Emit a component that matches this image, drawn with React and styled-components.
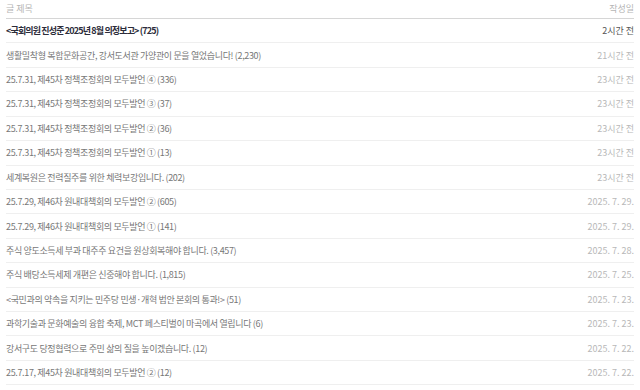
import React from 'react'
import styled, { createGlobalStyle } from 'styled-components'

const posts = [
    { id: 1, title: '<국회의원 진성준 2025년 8월 의정보고> (725)', date: '2시간 전', notice: true },
    { id: 2, title: '생활밀착형 복합문화공간, 강서도서관 가양관이 문을 열었습니다! (2,230)', date: '21시간 전' },
    { id: 3, title: '25.7.31, 제45차 정책조정회의 모두발언 ④ (336)', date: '23시간 전' },
    { id: 4, title: '25.7.31, 제45차 정책조정회의 모두발언 ③ (37)', date: '23시간 전' },
    { id: 5, title: '25.7.31, 제45차 정책조정회의 모두발언 ② (36)', date: '23시간 전' },
    { id: 6, title: '25.7.31, 제45차 정책조정회의 모두발언 ① (13)', date: '23시간 전' },
    { id: 7, title: '세계복원은 전력질주를 위한 체력보강입니다. (202)', date: '23시간 전' },
    { id: 8, title: '25.7.29, 제46차 원내대책회의 모두발언 ② (605)', date: '2025. 7. 29.' },
    { id: 9, title: '25.7.29, 제46차 원내대책회의 모두발언 ① (141)', date: '2025. 7. 29.' },
    { id: 10, title: '주식 양도소득세 부과 대주주 요건을 원상회복해야 합니다. (3,457)', date: '2025. 7. 28.' },
    { id: 11, title: '주식 배당소득세제 개편은 신중해야 합니다. (1,815)', date: '2025. 7. 25.' },
    { id: 12, title: '<국민과의 약속을 지키는 민주당 민생·개혁 법안 본회의 통과!> (51)', date: '2025. 7. 23.' },
    { id: 13, title: '과학기술과 문화예술의 융합 축제, MCT 페스티벌이 마곡에서 열립니다 (6)', date: '2025. 7. 23.' },
    { id: 14, title: '강서구도 당정협력으로 주민 삶의 질을 높이겠습니다. (12)', date: '2025. 7. 22.' },
    { id: 15, title: '25.7.17, 제45차 원내대책회의 모두발언 ② (12)', date: '2025. 7. 22.' },
]

const App = () => {
    return (
        <>
            <GlobalStyle />
            <Board>
                <HeadRow>
                    <HeadCell>글 제목</HeadCell>
                    <HeadCell>작성일</HeadCell>
                </HeadRow>
                {
                    posts.map(item => (
                        <PostRow key={item.id}>
                            <PostTitle $notice={item.notice}>{item.title}</PostTitle>
                            <PostDate $notice={item.notice}>{item.date}</PostDate>
                        </PostRow>
                    ))
                }
            </Board>
        </>
    )
}

export default App


// # Styled-components
const GlobalStyle = createGlobalStyle`
    body {
        margin: 0;
        background: #fff;
        font-family: "Noto Sans CJK KR", "Noto Sans", sans-serif;
    }
`

const Board = styled.div`
    padding: 0 6px;
    display: flex;
    flex-direction: column;
`

const HeadRow = styled.div`
    display: flex;
    justify-content: space-between;
    align-items: center;
    height: 18px;
    border-bottom: 1px solid #d6d6d6;
`

const HeadCell = styled.span`
    font-size: 9px;
    color: #b5b5b5;
    margin-top: -1px;
`

const PostRow = styled.div`
    display: flex;
    justify-content: space-between;
    align-items: center;
    height: 23.43px;
    border-bottom: 1px solid #efefef;
`

const PostTitle = styled.span`
    font-size: 9px;
    letter-spacing: ${p => p.$notice ? '-0.85px' : '-0.35px'};
    color: ${p => p.$notice ? '#2c2c3a' : '#777'};
    font-weight: ${p => p.$notice ? 700 : 400};
    white-space: nowrap;
`

const PostDate = styled.span`
    font-size: 9px;
    color: ${p => p.$notice ? '#555' : '#b8b8b8'};
    white-space: nowrap;
`
